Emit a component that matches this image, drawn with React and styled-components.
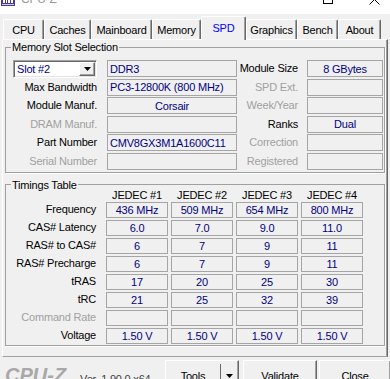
import React from 'react';
import styled, { createGlobalStyle } from 'styled-components';

const GlobalStyle = createGlobalStyle`
	html, body {
		margin: 0;
		padding: 0;
		background: #f0f0f0;
	}
	body {
		font-family: "Liberation Sans", Arial, sans-serif;
		font-size: 11px;
		letter-spacing: -0.2px;
		color: #000;
		overflow: hidden;
	}
`;

const Window = styled.div`
	width: 390px;
	height: 379px;
	overflow: hidden;
	display: flex;
	flex-direction: column;
	background: #f0f0f0;
`;

const TitleBar = styled.header`
	height: 14px;
	flex: none;
	background: #fff;
	overflow: hidden;
`;

const TitleInner = styled.div`
	margin-top: -16px;
	height: 30px;
	display: flex;
	align-items: center;
	padding-left: 1px;
`;

const TitleText = styled.span`
	margin-left: 6px;
	font-size: 12px;
	color: #9a9a9a;
`;

const Controls = styled.div`
	margin-left: auto;
	margin-right: -7px;
	display: flex;
`;

const ControlButton = styled.div`
	width: 46px;
	height: 30px;
	display: flex;
	align-items: center;
	justify-content: center;
`;

const TabStrip = styled.nav`
	height: 25px;
	flex: none;
	display: flex;
	align-items: flex-end;
	padding-left: 3px;
	position: relative;
	z-index: 1;
`;

const Tab = styled.div`
	width: ${(p) => p.$w}px;
	height: ${(p) => (p.$active ? 24 : 20)}px;
	margin-bottom: ${(p) => (p.$active ? -1 : 0)}px;
	box-sizing: border-box;
	display: flex;
	align-items: center;
	justify-content: center;
	border-top: 1px solid #fff;
	border-left: 1px solid #fff;
	border-right: 1px solid #696969;
	border-top-left-radius: 2px;
	border-top-right-radius: 2px;
	box-shadow: inset -1px 0 #a0a0a0;
	background: #f0f0f0;
	color: ${(p) => (p.$active ? '#0000ff' : '#000')};
	padding-bottom: ${(p) => (p.$active ? 1 : 0)}px;
	white-space: nowrap;
`;

const Panel = styled.main`
	margin: 0 2px;
	height: 318px;
	flex: none;
	box-sizing: border-box;
	border: 1px solid;
	border-color: #fff #696969 #a0a0a0 #fff;
	box-shadow: inset -1px 0 #a0a0a0;
	padding: 0 1px 0 2px;
	display: flex;
	flex-direction: column;
`;

const Group = styled.fieldset`
	margin: ${(p) => p.$top}px 1px 0 0;
	padding: ${(p) => p.$padTop}px 0 ${(p) => p.$padBottom}px 0;
	min-inline-size: 0;
	border: 1px solid #a0a0a0;
	box-shadow: 1px 1px 0 #fff;
`;

const GroupTitle = styled.legend`
	margin-left: 5px;
	padding: 0 1px;
	line-height: 10px;
	font-size: 11px;
`;

const SlotGrid = styled.div`
	display: grid;
	grid-template-columns: 101px 130px 70px 76px;
	grid-auto-rows: 17px;
	row-gap: 1.5px;
`;

const TimingGrid = styled.div`
	display: grid;
	grid-template-columns: 97px repeat(4, 62px);
	grid-template-rows: 10px;
	grid-auto-rows: 16px;
	column-gap: 3px;
	row-gap: 2px;
`;

const Label = styled.div`
	align-self: center;
	text-align: right;
	padding-right: ${(p) => p.$pad || 0}px;
	color: ${(p) => (p.$dim ? '#a0a0a0' : '#000')};
	white-space: nowrap;
	line-height: 13px;
`;

const Heading = styled.div`
	text-align: center;
	line-height: 10px;
	white-space: nowrap;
`;

const Field = styled.div`
	box-sizing: border-box;
	border: 1px solid #a5a5a5;
	display: flex;
	align-items: center;
	justify-content: ${(p) => (p.$left ? 'flex-start' : 'center')};
	padding: 0 2px;
	color: #000080;
	white-space: nowrap;
	overflow: hidden;
`;

const SlotSelect = styled.div`
	margin-left: 7px;
	width: 84px;
	height: 18px;
	box-sizing: border-box;
	border: 1px solid;
	border-color: #a0a0a0 #fff #fff #a0a0a0;
	box-shadow: inset 1px 1px #696969, inset -1px -1px #e3e3e3;
	background: #fff;
	display: flex;
	align-items: center;
	justify-content: space-between;
	padding: 0 1px 0 3px;
	color: #000080;
`;

const DropButton = styled.div`
	width: 16px;
	height: 14px;
	box-sizing: border-box;
	border: 1px solid;
	border-color: #fff #696969 #696969 #fff;
	box-shadow: inset -1px -1px #a0a0a0;
	background: #f0f0f0;
	display: flex;
	align-items: center;
	justify-content: center;
`;

const Footer = styled.footer`
	flex: 1;
	display: flex;
	align-items: flex-start;
	padding: 3px 0 0 5px;
`;

const Logo = styled.div`
	margin-top: 5px;
	font-size: 20px;
	line-height: 20px;
	font-weight: bold;
	font-style: italic;
	letter-spacing: 0;
	color: #a8a8a8;
`;

const Version = styled.div`
	margin: 13px 0 0 14px;
	line-height: 13px;
	color: #404040;
`;

const Buttons = styled.div`
	margin-left: auto;
	margin-right: -1px;
	display: flex;
`;

const Button = styled.div`
	width: ${(p) => p.$w}px;
	height: 28px;
	margin-left: ${(p) => p.$gap || 0}px;
	box-sizing: border-box;
	border: 1px solid;
	border-color: #fff #696969 #696969 #fff;
	box-shadow: inset -1px -1px #a0a0a0;
	background: #f0f0f0;
	display: flex;
	align-items: flex-start;
	justify-content: center;
	padding-top: 9px;
	line-height: 13px;
`;

const SplitButton = styled(Button)`
	justify-content: flex-start;
	padding-left: 0;
`;

const SplitMain = styled.div`
	width: 55px;
	text-align: center;
	border-right: 1px solid #696969;
	height: 18px;
	margin-top: -6px;
	padding-top: 6px;
	box-sizing: border-box;
`;

const SplitArrow = styled.div`
	flex: 1;
	display: flex;
	justify-content: center;
	padding-top: 4px;
`;

const ArrowDown = () => (
	<svg width="7" height="4" viewBox="0 0 7 4">
		<path d="M0 0h7L3.5 4z" fill="#000" />
	</svg>
);

const AppIcon = () => (
	<svg width="14" height="14" viewBox="0 0 14 14">
		<rect x="0" y="0" width="14" height="14" fill="#4a3a9c" />
		<rect x="2" y="8" width="2" height="3" fill="#fff" />
		<rect x="5" y="8" width="1" height="3" fill="#fff" />
		<rect x="7" y="8" width="2" height="3" fill="#fff" />
		<rect x="10" y="8" width="2" height="3" fill="#fff" />
		<rect x="1" y="12" width="12" height="1" fill="#cfc8f0" />
	</svg>
);

const tabs = [
	{ name: 'CPU', w: 41 },
	{ name: 'Caches', w: 47 },
	{ name: 'Mainboard', w: 61 },
	{ name: 'Memory', w: 49 },
	{ name: 'SPD', w: 45, active: true },
	{ name: 'Graphics', w: 51 },
	{ name: 'Bench', w: 41 },
	{ name: 'About', w: 43 },
];

const slotRows = [
	{ label: 'Max Bandwidth', value: 'PC3-12800K (800 MHz)', left: true, side: 'SPD Ext.', sideDim: true, sideValue: '' },
	{ label: 'Module Manuf.', value: 'Corsair', side: 'Week/Year', sideDim: true, sideValue: '' },
	{ label: 'DRAM Manuf.', dim: true, value: '', side: 'Ranks', sideValue: 'Dual' },
	{ label: 'Part Number', value: 'CMV8GX3M1A1600C11', left: true, side: 'Correction', sideDim: true, sideValue: '' },
	{ label: 'Serial Number', dim: true, value: '', side: 'Registered', sideDim: true, sideValue: '' },
];

const timings = [
	{ label: 'Frequency', values: ['436 MHz', '509 MHz', '654 MHz', '800 MHz'] },
	{ label: 'CAS# Latency', values: ['6.0', '7.0', '9.0', '11.0'] },
	{ label: 'RAS# to CAS#', values: ['6', '7', '9', '11'] },
	{ label: 'RAS# Precharge', values: ['6', '7', '9', '11'] },
	{ label: 'tRAS', values: ['17', '20', '25', '30'] },
	{ label: 'tRC', values: ['21', '25', '32', '39'] },
	{ label: 'Command Rate', dim: true, values: ['', '', '', ''] },
	{ label: 'Voltage', values: ['1.50 V', '1.50 V', '1.50 V', '1.50 V'] },
];

export default function App() {
	return (
		<Window>
			<GlobalStyle />
			<TitleBar>
				<TitleInner>
					<AppIcon />
					<TitleText>CPU-Z</TitleText>
					<Controls>
						<ControlButton>
							<svg width="10" height="10" viewBox="0 0 10 10">
								<path d="M0 5.5h10" stroke="#000" strokeWidth="1" />
							</svg>
						</ControlButton>
						<ControlButton>
							<svg width="10" height="10" viewBox="0 0 10 10">
								<rect x="0.5" y="0.5" width="9" height="9" fill="none" stroke="#000" />
							</svg>
						</ControlButton>
						<ControlButton>
							<svg width="11" height="11" viewBox="0 0 11 11">
								<path d="M0.5 0.5l10 10M10.5 0.5l-10 10" stroke="#000" strokeWidth="1" />
							</svg>
						</ControlButton>
					</Controls>
				</TitleInner>
			</TitleBar>

			<TabStrip>
				{tabs.map((t) => (
					<Tab key={t.name} $w={t.w} $active={t.active}>
						{t.name}
					</Tab>
				))}
			</TabStrip>

			<Panel>
				<Group $top={2} $padTop={8} $padBottom={2}>
					<GroupTitle>Memory Slot Selection</GroupTitle>
					<SlotGrid>
						<SlotSelect>
							Slot #2
							<DropButton>
								<ArrowDown />
							</DropButton>
						</SlotSelect>
						<Field $left>DDR3</Field>
						<Label $pad={9}>Module Size</Label>
						<Field>8 GBytes</Field>
						{slotRows.map((r) => (
							<React.Fragment key={r.label}>
								<Label $pad={10} $dim={r.dim}>
									{r.label}
								</Label>
								<Field $left={r.left}>{r.value}</Field>
								<Label $pad={9} $dim={r.sideDim}>
									{r.side}
								</Label>
								<Field>{r.sideValue}</Field>
							</React.Fragment>
						))}
					</SlotGrid>
				</Group>

				<Group $top={7} $padTop={0} $padBottom={1}>
					<GroupTitle>Timings Table</GroupTitle>
					<TimingGrid>
						<div />
						{['JEDEC #1', 'JEDEC #2', 'JEDEC #3', 'JEDEC #4'].map((h) => (
							<Heading key={h}>{h}</Heading>
						))}
						{timings.map((row) => (
							<React.Fragment key={row.label}>
								<Label $pad={7} $dim={row.dim}>
									{row.label}
								</Label>
								{row.values.map((v, i) => (
									<Field key={i}>{v}</Field>
								))}
							</React.Fragment>
						))}
					</TimingGrid>
				</Group>
			</Panel>

			<Footer>
				<Logo>CPU-Z</Logo>
				<Version>Ver. 1.90.0.x64</Version>
				<Buttons>
					<SplitButton $w={74}>
						<SplitMain>Tools</SplitMain>
						<SplitArrow>
							<ArrowDown />
						</SplitArrow>
					</SplitButton>
					<Button $w={74} $gap={4}>
						Validate
					</Button>
					<Button $w={72} $gap={2}>
						Close
					</Button>
				</Buttons>
			</Footer>
		</Window>
	);
}
